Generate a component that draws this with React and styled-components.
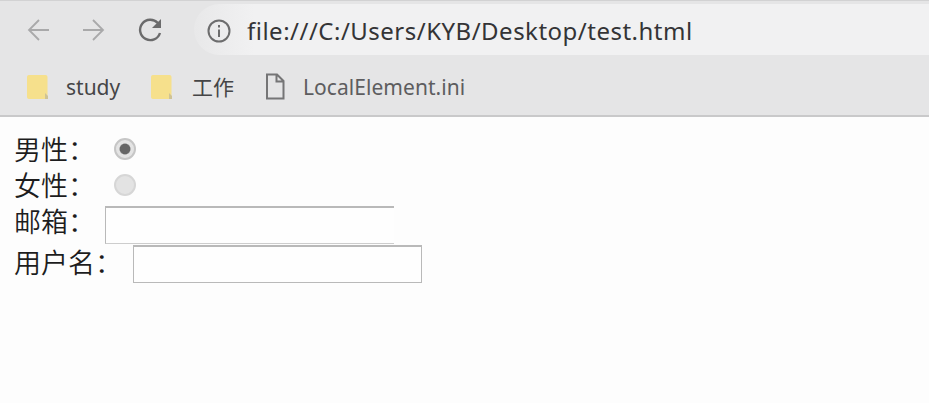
import React from "react";
import styled, { createGlobalStyle } from "styled-components";

const GlobalStyle = createGlobalStyle`
  * { box-sizing: border-box; }
  body { margin: 0; background: #fdfdfd; overflow: hidden; }
`;

const Browser = styled.div`
  width: 929px;
  height: 403px;
  display: flex;
  flex-direction: column;
  background: #fdfdfd;
  font-family: "Noto Sans", "Noto Sans CJK SC", sans-serif;
`;

const Chrome = styled.header`
  height: 117px;
  flex: none;
  background: #e5e5e6;
  border-top: 1px solid #d2d2d3;
  border-bottom: 2px solid #c9c9ca;
`;

const Toolbar = styled.div`
  height: 57px;
  display: flex;
  align-items: center;
  padding: 0 0 0 26px;
`;

const NavIcon = styled.svg`
  width: 26px;
  height: 26px;
  flex: none;
  margin-right: ${(p) => p.$gap}px;
  fill: none;
  stroke: ${(p) => (p.$active ? "#6b6b6c" : "#a9a9aa")};
  stroke-width: ${(p) => (p.$active ? 2.4 : 1.8)};
`;

const AddressBar = styled.div`
  flex: 1;
  height: 51px;
  display: flex;
  align-items: center;
  padding: 2px 0 0 13px;
  border-radius: 26px 0 0 26px;
  background: linear-gradient(to right, #e8e8e9, #f1f1f2 60px);
`;

const InfoIcon = styled.svg`
  width: 24px;
  height: 24px;
  flex: none;
  margin-right: 16px;
  fill: none;
  stroke: #6d6d6e;
  stroke-width: 2;
`;

const Address = styled.span`
  font-size: 24px;
  line-height: 34px;
  letter-spacing: 0.49px;
  white-space: nowrap;
  color: #343436;
`;

const Bookmarks = styled.nav`
  height: 57px;
  display: flex;
  align-items: center;
  padding-left: 26px;
`;

const Bookmark = styled.div`
  width: ${(p) => p.$width}px;
  display: flex;
  align-items: center;
  gap: ${(p) => p.$gap}px;
`;

const FolderIcon = styled.svg`
  width: 24px;
  height: 26px;
  flex: none;
`;

const FileIcon = styled.svg`
  width: 20px;
  height: 27px;
  flex: none;
  fill: none;
  stroke: #757576;
  stroke-width: 2;
`;

const BookmarkLabel = styled.span`
  font-size: 21px;
  line-height: 30px;
  letter-spacing: ${(p) => p.$tracking || 0}px;
  white-space: nowrap;
  color: ${(p) => p.$color || "#454547"};
`;

const Form = styled.main`
  padding: 15px 0 0 14px;
`;

const Row = styled.label`
  height: ${(p) => p.$height}px;
  display: flex;
  align-items: center;
`;

const Label = styled.span`
  width: ${(p) => p.$width}px;
  flex: none;
  margin-top: -${(p) => p.$raise}px;
  font-family: "Noto Sans CJK SC", sans-serif;
  font-size: 27px;
  font-weight: 350;
  line-height: 28px;
  white-space: nowrap;
  color: #1d1d1e;
`;

const Radio = styled.input`
  appearance: none;
  width: 22px;
  height: 22px;
  margin: -3px 0 0;
  border: 2px solid #d6d6d6;
  border-radius: 50%;
  background: #e3e3e3;
  &:checked {
    border-color: #c6c6c6;
    background: radial-gradient(circle, #666 0 4.8px, #e4e4e4 6px);
  }
`;

const Field = styled.input`
  appearance: none;
  width: 289px;
  height: 38px;
  margin: 0;
  padding: 2px 6px;
  border: solid #b9b9b9;
  border-width: 2px 1px 1px;
  border-radius: 0;
  outline: none;
  background: #fefefe;
  font: 24px "Noto Sans", sans-serif;
  ${(p) => p.$open && `
    border-right: 0;
    border-bottom-color: #cdcdcd;
  `}
`;

function Folder() {
  return (
    <FolderIcon viewBox="0 0 24 26">
      <rect x="1" y="1" width="20.5" height="24" rx="2" fill="#f6e08c" />
      <path d="M19 19l3 3v3h-3z" fill="#cfc395" />
    </FolderIcon>
  );
}

export default function App() {
  return (
    <Browser>
      <GlobalStyle />
      <Chrome>
        <Toolbar>
          <NavIcon viewBox="0 0 26 26" $gap={29}>
            <path d="M23 13H3M13 3L3 13l10 10" />
          </NavIcon>
          <NavIcon viewBox="0 0 26 26" $gap={30}>
            <path d="M2 13h20M12 3l10 10-10 10" />
          </NavIcon>
          <NavIcon viewBox="0 0 26 26" $gap={31} $active>
            <path d="M20.8 6A10.2 10.2 0 1 0 23 16" />
            <path d="M24 2v9h-9z" fill="#6b6b6c" stroke="none" />
          </NavIcon>
          <AddressBar>
            <InfoIcon viewBox="0 0 24 24">
              <circle cx="12" cy="12" r="10.5" />
              <path d="M12 10.5V18M12 6v2.5" />
            </InfoIcon>
            <Address>file:///C:/Users/KYB/Desktop/test.html</Address>
          </AddressBar>
        </Toolbar>
        <Bookmarks>
          <Bookmark $width={124} $gap={16}>
            <Folder />
            <BookmarkLabel>study</BookmarkLabel>
          </Bookmark>
          <Bookmark $width={115} $gap={18}>
            <Folder />
            <BookmarkLabel>工作</BookmarkLabel>
          </Bookmark>
          <Bookmark $width={210} $gap={18}>
            <FileIcon viewBox="0 0 20 27">
              <path d="M2 1.5h10l6.5 6.5v17.5H2zM11.5 1.5v7h7" />
            </FileIcon>
            <BookmarkLabel $tracking={0.05} $color="#5d5d5f">LocalElement.ini</BookmarkLabel>
          </Bookmark>
        </Bookmarks>
      </Chrome>
      <Form>
        <Row $height={36}>
          <Label $width={100} $raise={2}>男性：</Label>
          <Radio type="radio" name="gender" defaultChecked />
        </Row>
        <Row $height={37}>
          <Label $width={100} $raise={4}>女性：</Label>
          <Radio type="radio" name="gender" />
        </Row>
        <Row $height={40}>
          <Label $width={91} $raise={8}>邮箱：</Label>
          <Field type="text" $open />
        </Row>
        <Row $height={38}>
          <Label $width={119} $raise={4}>用户名：</Label>
          <Field type="text" />
        </Row>
      </Form>
    </Browser>
  );
}
